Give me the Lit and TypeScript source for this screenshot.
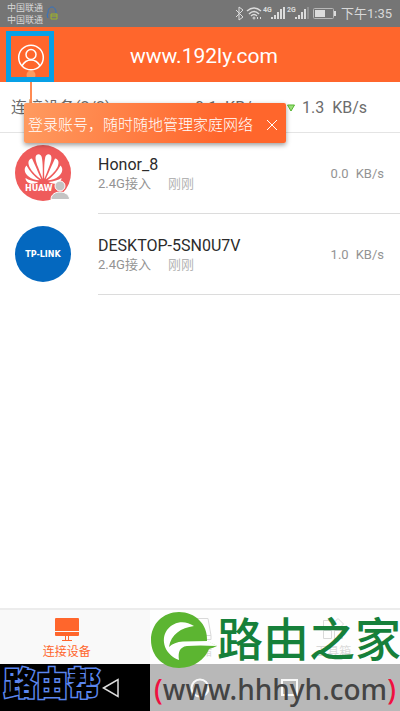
import { LitElement, html, svg, css } from "lit";
import { customElement, property } from "lit/decorators.js";

interface Device {
  name: string;
  brand: "huawei" | "tplink";
  speed: string;
}

const devices: Device[] = [
  { name: "Honor_8", brand: "huawei", speed: "0.0" },
  { name: "DESKTOP-5SN0U7V", brand: "tplink", speed: "1.0" },
];

const huaweiLogo = html`<svg viewBox="0 0 56 56" width="56" height="56" role="img" aria-label="Huawei">
  <circle cx="28" cy="28" r="28" fill="#ef5b5b" />
  <g fill="#fff">
    ${[-1, 1].map(
      (side) => svg`<g transform="translate(28.500 0) scale(${side} 1)">
        <path d="M.8 34C.6 27 .5 18 1.800 12C2.800 9 5 8.500 7 10C9 12 7.500 17 5.500 22C4 26 2.500 30 .8 34Z" />
        <path d="M2.200 34.300C5 28 9 19 11.500 13.500C15 14 16 17.500 14 22C11.500 27 6.500 31.500 2.200 34.300Z" />
        <path d="M4 35.300C9 31.500 14 26.500 17 20.500C20 23.500 19 28 15.500 31C12 34 8 35.300 4 35.300Z" />
        <path d="M5 37C10 36.500 15 35 18 33C18 36.500 14.500 39 11 38.800C8.500 38.500 7 38 5 37Z" />
      </g>`
    )}
    <text x="10" y="46" font-size="8" font-weight="700" font-family="DejaVu Sans, sans-serif">HUAW</text>
  </g>
  <g fill="#c4c4c4" stroke="#fff">
    <path d="M36 54.500C36 49 41 47 45 47C49 47 54.500 49 54.500 54.500Z" />
    <circle cx="45" cy="41" r="5" />
  </g>
</svg>`;

const tplinkLogo = html`<svg viewBox="0 0 56 56" width="56" height="56" role="img" aria-label="TP-Link">
  <circle cx="28" cy="28" r="28" fill="#0468bf" />
  <text x="28" y="31" text-anchor="middle" font-size="8" font-weight="700" fill="#fff" font-family="DejaVu Sans, sans-serif">TP-LINK</text>
</svg>`;

@customElement("status-bar")
class StatusBar extends LitElement {
  static styles = css`
    :host {
      display: flex;
      align-items: center;
      height: 27px;
      padding: 0 8px 0 7px;
      background: #757575;
      color: #d8d8d8;
      font-size: 9px;
      line-height: 12px;
    }
    .drop {
      margin: 0 auto 0 3px;
    }
    .clock {
      font-size: 13px;
      line-height: 20px;
      margin-left: 4px;
    }
  `;
  render() {
    const bars = (x: number) =>
      svg`<path d="M${x} 19v-2M${x + 3} 19v-4M${x + 6} 19v-7M${x + 9} 19V9M${x + 12} 19V7" />`;
    return html`
      <div><div>中国联通</div><div>中国联通</div></div>
      <svg class="drop" width="12" height="16" viewBox="0 0 12 16" fill="none">
        <path d="M2 12L1 9L2 7C2 3 4 1 6 1S10 3 10 7" stroke="#2d73c8" />
        <path d="M5 8h6v5H5zM5 10h6" stroke="#9db52a" />
      </svg>
      <svg width="102" height="27" viewBox="0 0 102 27" fill="none" stroke="#dcdcdc">
        <path d="M1 10l7 7-4 3V7l4 3-7 7" />
        <path d="M12 11q7-6 14 0M14 14q5-5 10 0M16 16q3-3 6 0" stroke-width="1.500" />
        <circle cx="19" cy="18" r="1" />
        <path d="M22 18h1M25 18h1" stroke-width="2" />
        <g stroke-width="2">${bars(37)}</g>
        <g stroke-width="2">${bars(61)}</g>
        <path d="M73 19V7" stroke="#919191" stroke-width="2" />
        <g fill="#dcdcdc" stroke="none" font-size="7" font-weight="700" font-family="Roboto, sans-serif">
          <text x="28" y="12">4G</text><text x="52" y="12">2G</text>
        </g>
        <rect x="78.500" y="8.500" width="20" height="10" rx="1" stroke="#b8b8b8" />
        <path d="M80 10h10v7H80z" fill="#dcdcdc" stroke="none" />
        <path d="M100 11v5" stroke-width="2" />
      </svg>
      <span class="clock">下午1:35</span>
    `;
  }
}

@customElement("device-row")
class DeviceRow extends LitElement {
  static styles = css`
    :host {
      display: flex;
      gap: 27px;
      padding-left: 15px;
    }
    .logo {
      display: flex;
      padding-top: 12px;
    }
    .body {
      flex: 1;
      box-sizing: border-box;
      height: 81px;
      display: flex;
      align-items: center;
      justify-content: space-between;
      padding: 2px 16px 0 0;
      border-bottom: 1px solid #dcdcdc;
    }
    .name {
      font-size: 16px;
      line-height: 20px;
      color: #2b2b2b;
    }
    .meta {
      display: flex;
      gap: 17px;
      font-size: 13px;
      line-height: 18px;
      color: #939393;
    }
    .when {
      color: #b4b4b4;
    }
    .speed {
      display: flex;
      gap: 7px;
      font-size: 13px;
      line-height: 20px;
      color: #939393;
    }
  `;
  @property({ attribute: false }) device!: Device;
  render() {
    return html`
      <div class="logo">${this.device.brand === "huawei" ? huaweiLogo : tplinkLogo}</div>
      <div class="body">
        <div>
          <div class="name">${this.device.name}</div>
          <div class="meta"><span>2.4G接入</span><span class="when">刚刚</span></div>
        </div>
        <div class="speed"><span>${this.device.speed}</span><span>KB/s</span></div>
      </div>
    `;
  }
}

@customElement("app-root")
class AppRoot extends LitElement {
  static styles = css`
    :host {
      display: flex;
      flex-direction: column;
      position: relative;
      min-height: 100vh;
      overflow: hidden;
      background: #fff;
      font-family: Roboto, "Noto Sans CJK SC", sans-serif;
    }
    button {
      font: inherit;
      color: inherit;
      border: 0;
      padding: 0;
      background: none;
      display: flex;
      align-items: center;
      justify-content: center;
    }
    header {
      display: grid;
      grid-template-columns: 60px 1fr 52px;
      align-items: center;
      height: 55px;
      background: #ff662c;
      color: #fff;
    }
    h1 {
      margin: 0;
      padding-top: 2px;
      font-size: 21px;
      line-height: 28px;
      font-weight: 400;
      text-align: center;
    }
    .account {
      box-sizing: border-box;
      align-self: end;
      width: 48px;
      height: 51px;
      margin-left: 6px;
      border: 5px solid #08a0e6;
      color: #fff;
    }
    .summary {
      box-sizing: border-box;
      display: flex;
      align-items: center;
      justify-content: space-between;
      height: 51px;
      padding: 2px 33px 0 11px;
      border-bottom: 1px solid #e4e4e4;
      font-size: 16px;
      line-height: 24px;
      color: #6c6c6c;
    }
    .rates {
      display: flex;
      align-items: center;
      gap: 7px;
    }
    .up {
      margin-right: 20px;
    }
    .tip {
      position: absolute;
      left: 24px;
      top: 103px;
      display: flex;
      align-items: center;
      gap: 14px;
      height: 40px;
      padding: 4px 9px 0 4px;
      box-sizing: border-box;
      border-radius: 2px;
      background: linear-gradient(100deg, #ff9b60, #ff662c 75%);
      box-shadow: 0 2px 5px #0006;
      color: #fff;
      font-size: 15px;
      line-height: 24px;
      font-weight: 300;
      white-space: nowrap;
    }
    .stem {
      position: absolute;
      left: 30px;
      top: 82px;
      width: 2px;
      height: 21px;
      background: #ff8a52;
    }
    main {
      flex: 1;
    }
    .tabs {
      display: grid;
      grid-template-columns: repeat(3, 1fr);
      height: 54px;
      border-top: 2px solid #ececec;
      background: #f9f9f9;
    }
    .tab {
      flex-direction: column;
      gap: 2px;
      padding-top: 5px;
      font-size: 12px;
      line-height: 18px;
      color: #777;
    }
    .tab.active {
      color: #ff662c;
    }
    .system {
      position: relative;
      display: grid;
      grid-template-columns: repeat(3, 89px);
      justify-content: center;
      height: 47px;
      background: #000;
    }
    .brand {
      position: absolute;
      left: 4px;
      top: 0;
      font-size: 32px;
      line-height: 40px;
      font-weight: 900;
      color: #000;
      white-space: nowrap;
      -webkit-text-stroke: 3px #5b86f0;
      paint-order: stroke fill;
    }
    .watermark {
      position: absolute;
      right: 0;
      bottom: 0;
      width: 250px;
    }
    .wash {
      display: flex;
      align-items: flex-start;
      height: 54px;
      background: #ffffffb8;
    }
    .leaf {
      position: relative;
      z-index: 1;
      flex: none;
      margin-left: 1px;
    }
    .site {
      font-size: 46px;
      line-height: 60px;
      font-weight: 500;
      color: #16803a;
      white-space: nowrap;
    }
    .url {
      height: 47px;
      background: #ffffffb8;
      font-family: "Noto Sans", sans-serif;
      font-size: 28px;
      line-height: 50px;
      font-weight: 500;
      text-align: center;
      color: #444;
    }
    .paren {
      color: #f01040;
    }
  `;
  render() {
    return html`
      <status-bar></status-bar>
      <header>
        <button class="account" aria-label="账号">
          <svg width="38" height="41" viewBox="0 0 38 41" fill="none" stroke="#fff" stroke-width="1.500">
            <circle cx="20" cy="39" r="4.500" fill="#ff9b60" stroke="none" />
            <circle cx="20" cy="21.500" r="12.300" />
            <circle cx="20" cy="18.500" r="5" />
            <path d="M11 30C13 26 17 24 20 24S27 26 29 30" />
          </svg>
        </button>
        <h1>www.192ly.com</h1>
      </header>
      <div class="summary">
        <span>连接设备(2/2)</span>
        <span class="rates">
          <span class="up">0.1&nbsp; KB/s</span>
          <svg width="8" height="8" viewBox="0 0 8 8"><path d="M.5 1h7L4 7z" fill="#9be07a" stroke="#55b52f" /></svg>
          <span>1.3&nbsp; KB/s</span>
        </span>
      </div>
      <main>${devices.map((d) => html`<device-row .device=${d}></device-row>`)}</main>
      <nav class="tabs">
        <button class="tab active">
          <svg width="24" height="23" viewBox="0 0 24 23">
            <path d="M0 1q0-1 1-1h22q1 0 1 1v12H0zM0 14h24v3q0 1-1 1H1q-1 0-1-1z" fill="#ff662c" />
            <path d="M10.500 18v4M13.500 18v4M7 22.500h10" stroke="#ff662c" />
          </svg>
          <span>连接设备</span>
        </button>
        <button class="tab">
          <svg width="24" height="23" viewBox="0 0 24 23" fill="none" stroke="#777">
            <path d="M4 .5h16l3 17H1zM1 17.500v4h22v-4" />
          </svg>
          <span>存储</span>
        </button>
        <button class="tab">
          <svg width="24" height="23" viewBox="0 0 24 23" fill="none" stroke="#777">
            <path d="M2.500 2.500h8v8h-8zM2.500 12.500h8v8h-8zM13.500 12.500h8v8h-8zM17 .5l5.500 5.500-5.500 5.500-5.500-5.500z" />
          </svg>
          <span>工具箱</span>
        </button>
      </nav>
      <div class="system">
        <span class="brand">路由帮</span>
        <button aria-label="返回">
          <svg width="18" height="20" viewBox="0 0 18 20" fill="none" stroke="#ddd" stroke-width="1.500"><path d="M1.500 10L16 1.500v17z" /></svg>
        </button>
        <button aria-label="主页">
          <svg width="20" height="20" viewBox="0 0 20 20" fill="none" stroke="#eee" stroke-width="2"><circle cx="10" cy="10" r="8.500" /></svg>
        </button>
        <button aria-label="最近任务">
          <svg width="17" height="17" viewBox="0 0 17 17" fill="none" stroke="#eee" stroke-width="2"><path d="M1 1h15v15H1z" /></svg>
        </button>
      </div>
      <div class="stem"></div>
      <div class="tip">
        <span>登录账号，随时随地管理家庭网络</span>
        <button aria-label="关闭">
          <svg width="10" height="10" viewBox="0 0 10 10" stroke="#fff"><path d="M0 0l10 10M10 0L0 10" /></svg>
        </button>
      </div>
      <div class="watermark">
        <div class="wash">
          <svg class="leaf" width="66" height="59" viewBox="0 0 66 59">
            <path d="M56 31C57 14 44 2 28 2C12 2 0 14 0 30C0 46 12 58 28 58C43 58 54 49 58 39Q62 38 66 36Z" fill="#5cb531" />
            <path d="M28 50C14 45 9 30 16 20C23 11 34 10 43 16C30 18 20 24 18 37Q23 32 32 31.500L57 31L66 36Q48 35 36 36C28 37 27 43 28 50Z" fill="#fff" />
          </svg>
          <span class="site">路由之家</span>
        </div>
        <div class="url"><span class="paren">(</span>www.hhhyh.com<span class="paren">)</span></div>
      </div>
    `;
  }
}
